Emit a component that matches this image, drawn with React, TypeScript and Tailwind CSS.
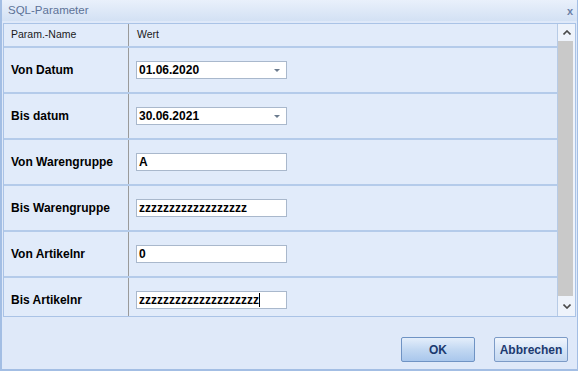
import React from "react";

const rows: { label: string; value: string; combo?: boolean; caret?: boolean }[] = [
  { label: "Von Datum", value: "01.06.2020", combo: true },
  { label: "Bis datum", value: "30.06.2021", combo: true },
  { label: "Von Warengruppe", value: "A" },
  { label: "Bis Warengruppe", value: "zzzzzzzzzzzzzzzzzz" },
  { label: "Von Artikelnr", value: "0" },
  { label: "Bis Artikelnr", value: "zzzzzzzzzzzzzzzzzzzz", caret: true },
];

export default function App() {
  return (
    <div
      className="w-[578px] h-[371px] bg-[#dfe9f9] border-l-2 border-r border-b-2 border-[#a3bee4] flex flex-col overflow-hidden"
      style={{ fontFamily: '"Liberation Sans", Arial, sans-serif' }}
    >
      {/* Title bar */}
      <div className="h-[21px] shrink-0 bg-gradient-to-b from-[#e9f0fb] to-[#d3e1f4] flex items-center justify-between pl-[6px] pr-[4px]">
        <span className="text-[11.5px] text-[#5d7297] leading-none">SQL-Parameter</span>
        <span className="text-[11px] font-bold text-[#6a7fa6] leading-none mt-[1px]">x</span>
      </div>

      {/* Grid */}
      <div className="mt-[2px] ml-[1px] w-[573px] h-[294px] border border-[#aac3e6] flex bg-[#e1ebfa]">
        <div className="flex-1 overflow-hidden">
          {/* header */}
          <div className="h-[24px] flex border-b-2 border-[#b4cbea]">
            <div className="w-[124px] pl-[7px] flex items-center text-[10.5px] text-[#1a1a1a]">Param.-Name</div>
            <div className="border-l border-[#9a9a9a] flex-1 pl-[8px] flex items-center text-[10.5px] text-[#1a1a1a]">Wert</div>
          </div>
          {rows.map((r) => (
            <div key={r.label} className="h-[46px] shrink-0 flex border-b-2 border-[#b4cbea]">
              <div className="w-[124px] pl-[7px] flex items-center text-[12px] font-bold text-black">{r.label}</div>
              <div className="border-l border-[#9a9a9a] flex-1 pl-[7px] flex items-center">
                <div className="w-[151px] h-[18px] bg-white border border-[#a9b8cc] flex items-center justify-between pl-[2px] pr-[6px]">
                  <span className="text-[12px] font-bold text-black leading-none flex items-center">
                    {r.value}
                    {r.caret && <span className="inline-block w-[1px] h-[14px] bg-black" />}
                  </span>
                  {r.combo && (
                    <svg width="6" height="3" viewBox="0 0 6 3">
                      <path d="M0 0 H6 L3 3 Z" fill="#6b7b8e" />
                    </svg>
                  )}
                </div>
              </div>
            </div>
          ))}
        </div>
        {/* Scrollbar */}
        <div className="w-[18px] border-l border-[#b7cbe6] bg-[#eef3fb] flex flex-col items-stretch">
          <div className="h-[17px] flex items-center justify-center">
            <svg width="8" height="5" viewBox="0 0 8 5">
              <path d="M0.5 4.5 L4 1 L7.5 4.5" stroke="#4a4a4a" strokeWidth="1.6" fill="none" />
            </svg>
          </div>
          <div className="flex-1 bg-[#c9c9c9] mr-[2px]" />
          <div className="h-[20px] flex items-center justify-center">
            <svg width="8" height="5" viewBox="0 0 8 5">
              <path d="M0.5 0.5 L4 4 L7.5 0.5" stroke="#4a4a4a" strokeWidth="1.6" fill="none" />
            </svg>
          </div>
        </div>
      </div>

      {/* Buttons */}
      <div className="flex-1 flex items-end justify-end gap-[19px] pr-[9px] pb-[7px]">
        <button className="w-[74px] h-[25px] rounded-[2px] border border-[#6f93c4] bg-gradient-to-b from-[#e4eefb] via-[#c2d8f2] to-[#a9c7ec] text-[12px] font-bold text-[#1c3a70]">
          OK
        </button>
        <button className="w-[74px] h-[25px] rounded-[2px] border border-[#7c9bc7] bg-gradient-to-b from-[#f0f5fd] via-[#d7e5f7] to-[#c4d8f1] text-[12px] font-bold text-[#1c3a70]">
          Abbrechen
        </button>
      </div>
    </div>
  );
}
